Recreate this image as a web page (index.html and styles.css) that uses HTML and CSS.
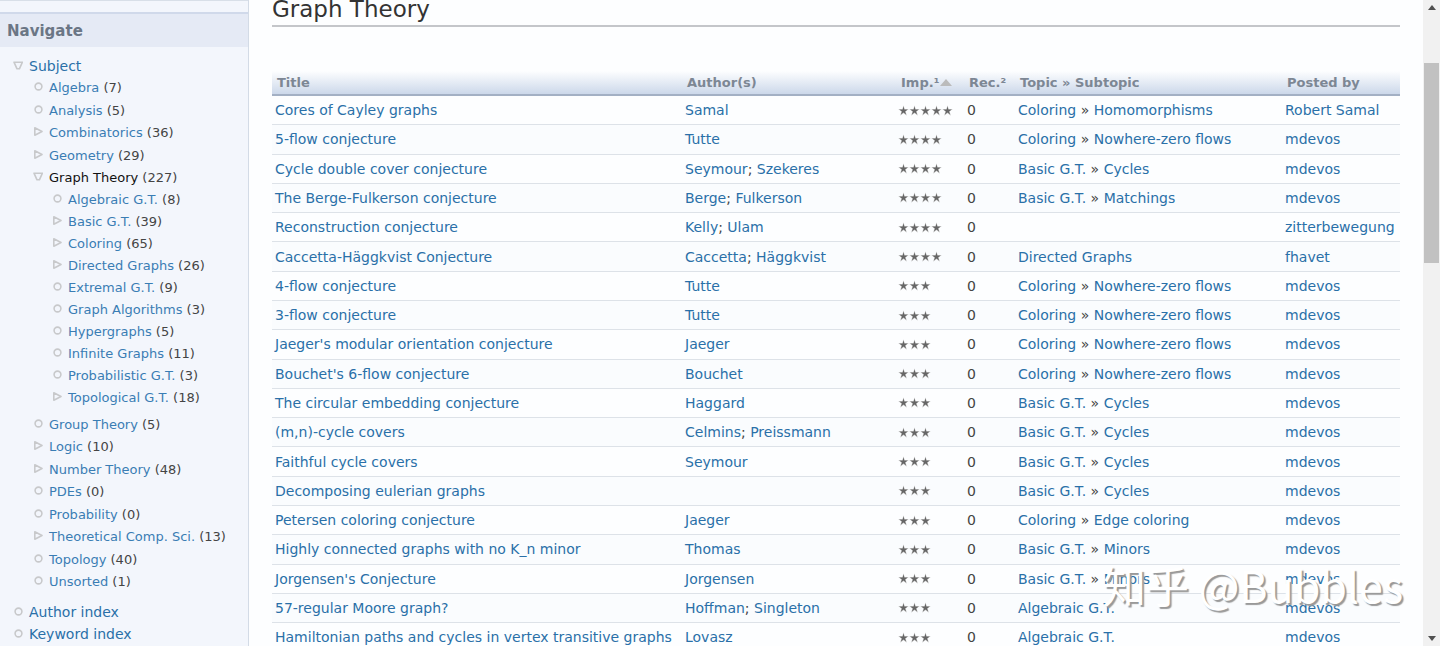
FILE: index.html
```html
<!DOCTYPE html>
<html lang="en">
<head>
    <meta charset="UTF-8">
    <title>Graph Theory | Open Problem Garden</title>
    <link rel="stylesheet" href="styles.css">
</head>
<body>
    <!-- shared icon shapes -->
    <svg class="sprite" aria-hidden="true">
        <symbol id="leaf" viewBox="0 0 10 10"><circle cx="5.5" cy="4.5" r="3.4" /></symbol>
        <symbol id="closed" viewBox="0 0 10 10"><path d="M1.8 0.8 L9 4.5 L1.8 8.2 Z" /></symbol>
        <symbol id="open" viewBox="0 0 10 10"><path d="M1 1.2 H9.4 L6.4 7.8 H4 Z" /></symbol>
        <symbol id="star" viewBox="0 0 11 11">
            <path class="glow" d="M5.5 0.2 L6.7 4 L10.9 4 L7.7 6.5 L9 10.8 L5.5 8.2 L2 10.8 L3.3 6.5 L0.1 4 L4.3 4 Z" />
            <path d="M5.5 1.2 L6.4 4.4 L9.8 4.4 L7.1 6.4 L8.2 9.7 L5.5 7.6 L2.8 9.7 L3.9 6.4 L1.2 4.4 L4.6 4.4 Z" />
        </symbol>
        <symbol id="stars3" viewBox="0 0 55 11">
            <use href="#star" width="11" height="11" />
            <use href="#star" x="11" width="11" height="11" />
            <use href="#star" x="22" width="11" height="11" />
        </symbol>
        <symbol id="stars4" viewBox="0 0 55 11">
            <use href="#stars3" width="55" height="11" />
            <use href="#star" x="33" width="11" height="11" />
        </symbol>
        <symbol id="stars5" viewBox="0 0 55 11">
            <use href="#stars4" width="55" height="11" />
            <use href="#star" x="44" width="11" height="11" />
        </symbol>
    </svg>

    <aside class="sidebar">
        <div class="block-end"></div>
        <h2>Navigate</h2>
        <ul class="menu">
            <li><svg class="mark"><use href="#open" /></svg><a href="#">Subject</a>
                <ul class="subjects">
                    <li><svg class="mark"><use href="#leaf" /></svg><a href="#">Algebra</a> (7)</li>
                    <li><svg class="mark"><use href="#leaf" /></svg><a href="#">Analysis</a> (5)</li>
                    <li><svg class="mark"><use href="#closed" /></svg><a href="#">Combinatorics</a> (36)</li>
                    <li><svg class="mark"><use href="#closed" /></svg><a href="#">Geometry</a> (29)</li>
                    <li><svg class="mark"><use href="#open" /></svg><a href="#" class="active">Graph Theory</a> (227)
                        <ul class="topics">
                            <li><svg class="mark"><use href="#leaf" /></svg><a href="#">Algebraic G.T.</a> (8)</li>
                            <li><svg class="mark"><use href="#closed" /></svg><a href="#">Basic G.T.</a> (39)</li>
                            <li><svg class="mark"><use href="#closed" /></svg><a href="#">Coloring</a> (65)</li>
                            <li><svg class="mark"><use href="#closed" /></svg><a href="#">Directed Graphs</a> (26)</li>
                            <li><svg class="mark"><use href="#leaf" /></svg><a href="#">Extremal G.T.</a> (9)</li>
                            <li><svg class="mark"><use href="#leaf" /></svg><a href="#">Graph Algorithms</a> (3)</li>
                            <li><svg class="mark"><use href="#leaf" /></svg><a href="#">Hypergraphs</a> (5)</li>
                            <li><svg class="mark"><use href="#leaf" /></svg><a href="#">Infinite Graphs</a> (11)</li>
                            <li><svg class="mark"><use href="#leaf" /></svg><a href="#">Probabilistic G.T.</a> (3)</li>
                            <li><svg class="mark"><use href="#closed" /></svg><a href="#">Topological G.T.</a> (18)</li>
                        </ul>
                    </li>
                    <li><svg class="mark"><use href="#leaf" /></svg><a href="#">Group Theory</a> (5)</li>
                    <li><svg class="mark"><use href="#closed" /></svg><a href="#">Logic</a> (10)</li>
                    <li><svg class="mark"><use href="#closed" /></svg><a href="#">Number Theory</a> (48)</li>
                    <li><svg class="mark"><use href="#leaf" /></svg><a href="#">PDEs</a> (0)</li>
                    <li><svg class="mark"><use href="#leaf" /></svg><a href="#">Probability</a> (0)</li>
                    <li><svg class="mark"><use href="#closed" /></svg><a href="#">Theoretical Comp. Sci.</a> (13)</li>
                    <li><svg class="mark"><use href="#leaf" /></svg><a href="#">Topology</a> (40)</li>
                    <li><svg class="mark"><use href="#leaf" /></svg><a href="#">Unsorted</a> (1)</li>
                </ul>
            </li>
            <li><svg class="mark"><use href="#leaf" /></svg><a href="#">Author index</a></li>
            <li><svg class="mark"><use href="#leaf" /></svg><a href="#">Keyword index</a></li>
        </ul>
    </aside>

    <main class="content">
        <h1>Graph Theory</h1>
        <table class="problems">
            <colgroup>
                <col class="col-title">
                <col class="col-author">
                <col class="col-imp">
                <col class="col-rec">
                <col class="col-topic">
                <col class="col-user">
            </colgroup>
            <thead>
                <tr>
                    <th>Title</th>
                    <th>Author(s)</th>
                    <th>Imp.¹<svg class="sort" viewBox="0 0 12 7"><path d="M6 0 L12 7 H0 Z" /></svg></th>
                    <th>Rec.²</th>
                    <th>Topic » Subtopic</th>
                    <th>Posted by</th>
                </tr>
            </thead>
            <tbody>
                <tr>
                    <td><a href="#">Cores of Cayley graphs</a></td>
                    <td><a href="#">Samal</a></td>
                    <td class="imp"><svg class="stars"><use href="#stars5" /></svg></td>
                    <td>0</td>
                    <td><a href="#">Coloring</a> » <a href="#">Homomorphisms</a></td>
                    <td><a href="#">Robert Samal</a></td>
                </tr>
                <tr>
                    <td><a href="#">5-flow conjecture</a></td>
                    <td><a href="#">Tutte</a></td>
                    <td class="imp"><svg class="stars"><use href="#stars4" /></svg></td>
                    <td>0</td>
                    <td><a href="#">Coloring</a> » <a href="#">Nowhere-zero flows</a></td>
                    <td><a href="#">mdevos</a></td>
                </tr>
                <tr>
                    <td><a href="#">Cycle double cover conjecture</a></td>
                    <td><a href="#">Seymour</a>; <a href="#">Szekeres</a></td>
                    <td class="imp"><svg class="stars"><use href="#stars4" /></svg></td>
                    <td>0</td>
                    <td><a href="#">Basic G.T.</a> » <a href="#">Cycles</a></td>
                    <td><a href="#">mdevos</a></td>
                </tr>
                <tr>
                    <td><a href="#">The Berge-Fulkerson conjecture</a></td>
                    <td><a href="#">Berge</a>; <a href="#">Fulkerson</a></td>
                    <td class="imp"><svg class="stars"><use href="#stars4" /></svg></td>
                    <td>0</td>
                    <td><a href="#">Basic G.T.</a> » <a href="#">Matchings</a></td>
                    <td><a href="#">mdevos</a></td>
                </tr>
                <tr>
                    <td><a href="#">Reconstruction conjecture</a></td>
                    <td><a href="#">Kelly</a>; <a href="#">Ulam</a></td>
                    <td class="imp"><svg class="stars"><use href="#stars4" /></svg></td>
                    <td>0</td>
                    <td></td>
                    <td><a href="#">zitterbewegung</a></td>
                </tr>
                <tr>
                    <td><a href="#">Caccetta-Häggkvist Conjecture</a></td>
                    <td><a href="#">Caccetta</a>; <a href="#">Häggkvist</a></td>
                    <td class="imp"><svg class="stars"><use href="#stars4" /></svg></td>
                    <td>0</td>
                    <td><a href="#">Directed Graphs</a></td>
                    <td><a href="#">fhavet</a></td>
                </tr>
                <tr>
                    <td><a href="#">4-flow conjecture</a></td>
                    <td><a href="#">Tutte</a></td>
                    <td class="imp"><svg class="stars"><use href="#stars3" /></svg></td>
                    <td>0</td>
                    <td><a href="#">Coloring</a> » <a href="#">Nowhere-zero flows</a></td>
                    <td><a href="#">mdevos</a></td>
                </tr>
                <tr>
                    <td><a href="#">3-flow conjecture</a></td>
                    <td><a href="#">Tutte</a></td>
                    <td class="imp"><svg class="stars"><use href="#stars3" /></svg></td>
                    <td>0</td>
                    <td><a href="#">Coloring</a> » <a href="#">Nowhere-zero flows</a></td>
                    <td><a href="#">mdevos</a></td>
                </tr>
                <tr>
                    <td><a href="#">Jaeger's modular orientation conjecture</a></td>
                    <td><a href="#">Jaeger</a></td>
                    <td class="imp"><svg class="stars"><use href="#stars3" /></svg></td>
                    <td>0</td>
                    <td><a href="#">Coloring</a> » <a href="#">Nowhere-zero flows</a></td>
                    <td><a href="#">mdevos</a></td>
                </tr>
                <tr>
                    <td><a href="#">Bouchet's 6-flow conjecture</a></td>
                    <td><a href="#">Bouchet</a></td>
                    <td class="imp"><svg class="stars"><use href="#stars3" /></svg></td>
                    <td>0</td>
                    <td><a href="#">Coloring</a> » <a href="#">Nowhere-zero flows</a></td>
                    <td><a href="#">mdevos</a></td>
                </tr>
                <tr>
                    <td><a href="#">The circular embedding conjecture</a></td>
                    <td><a href="#">Haggard</a></td>
                    <td class="imp"><svg class="stars"><use href="#stars3" /></svg></td>
                    <td>0</td>
                    <td><a href="#">Basic G.T.</a> » <a href="#">Cycles</a></td>
                    <td><a href="#">mdevos</a></td>
                </tr>
                <tr>
                    <td><a href="#">(m,n)-cycle covers</a></td>
                    <td><a href="#">Celmins</a>; <a href="#">Preissmann</a></td>
                    <td class="imp"><svg class="stars"><use href="#stars3" /></svg></td>
                    <td>0</td>
                    <td><a href="#">Basic G.T.</a> » <a href="#">Cycles</a></td>
                    <td><a href="#">mdevos</a></td>
                </tr>
                <tr>
                    <td><a href="#">Faithful cycle covers</a></td>
                    <td><a href="#">Seymour</a></td>
                    <td class="imp"><svg class="stars"><use href="#stars3" /></svg></td>
                    <td>0</td>
                    <td><a href="#">Basic G.T.</a> » <a href="#">Cycles</a></td>
                    <td><a href="#">mdevos</a></td>
                </tr>
                <tr>
                    <td><a href="#">Decomposing eulerian graphs</a></td>
                    <td></td>
                    <td class="imp"><svg class="stars"><use href="#stars3" /></svg></td>
                    <td>0</td>
                    <td><a href="#">Basic G.T.</a> » <a href="#">Cycles</a></td>
                    <td><a href="#">mdevos</a></td>
                </tr>
                <tr>
                    <td><a href="#">Petersen coloring conjecture</a></td>
                    <td><a href="#">Jaeger</a></td>
                    <td class="imp"><svg class="stars"><use href="#stars3" /></svg></td>
                    <td>0</td>
                    <td><a href="#">Coloring</a> » <a href="#">Edge coloring</a></td>
                    <td><a href="#">mdevos</a></td>
                </tr>
                <tr>
                    <td><a href="#">Highly connected graphs with no K_n minor</a></td>
                    <td><a href="#">Thomas</a></td>
                    <td class="imp"><svg class="stars"><use href="#stars3" /></svg></td>
                    <td>0</td>
                    <td><a href="#">Basic G.T.</a> » <a href="#">Minors</a></td>
                    <td><a href="#">mdevos</a></td>
                </tr>
                <tr>
                    <td><a href="#">Jorgensen's Conjecture</a></td>
                    <td><a href="#">Jorgensen</a></td>
                    <td class="imp"><svg class="stars"><use href="#stars3" /></svg></td>
                    <td>0</td>
                    <td><a href="#">Basic G.T.</a> » <a href="#">Minors</a></td>
                    <td><a href="#">mdevos</a></td>
                </tr>
                <tr>
                    <td><a href="#">57-regular Moore graph?</a></td>
                    <td><a href="#">Hoffman</a>; <a href="#">Singleton</a></td>
                    <td class="imp"><svg class="stars"><use href="#stars3" /></svg></td>
                    <td>0</td>
                    <td><a href="#">Algebraic G.T.</a></td>
                    <td><a href="#">mdevos</a></td>
                </tr>
                <tr>
                    <td><a href="#">Hamiltonian paths and cycles in vertex transitive graphs</a></td>
                    <td><a href="#">Lovasz</a></td>
                    <td class="imp"><svg class="stars"><use href="#stars3" /></svg></td>
                    <td>0</td>
                    <td><a href="#">Algebraic G.T.</a></td>
                    <td><a href="#">mdevos</a></td>
                </tr>
            </tbody>
        </table>
    </main>

    <div class="scrollbar" aria-hidden="true">
        <svg class="arrow" viewBox="0 0 8 5"><path d="M4 0 L8 5 H0 Z" /></svg>
        <div class="track"><div class="thumb"></div></div>
        <svg class="arrow" viewBox="0 0 8 5"><path d="M0 0 H8 L4 5 Z" /></svg>
    </div>

    <div class="watermark">知乎 @Bubbles</div>
</body>
</html>
```
FILE: styles.css
```css
* {
    box-sizing: border-box;
}

body {
    display: flex;
    height: 100vh;
    margin: 0;
    overflow: hidden;
    position: relative;
    font-family: "DejaVu Sans", Verdana, sans-serif;
    font-size: 14px;
    color: #444;
    background-color: #fdfeff;
}

a {
    color: #2a70a8;
    text-decoration: none;
}

a:hover {
    text-decoration: underline;
}

.sprite {
    position: absolute;
    width: 0;
    height: 0;
}

/* sidebar */
.sidebar {
    flex: none;
    width: 249px;
    border-right: 1px solid #d3dbe6;
    background-color: #f3f6fc;
}

.block-end {
    height: 12px;
    border-top: 1px solid #d8dfe8;
}

.sidebar h2 {
    margin: 0;
    padding: 1px 7px 0;
    border-top: 2px solid #d0d9ea;
    background-color: #e5eaf5;
    font-size: 15px;
    line-height: 32px;
    color: #6b7685;
}

.menu,
.menu ul {
    margin: 0;
    padding: 0;
    list-style: none;
}

.menu {
    padding: 8px 0 0 13px;
    line-height: 22px;
}

    .menu .subjects {
        padding: 0 0 7px 20px;
        font-size: 13px;
    }

    .subjects > li:nth-child(odd) {
        padding-bottom: 1px;
    }

    .menu .topics {
        padding: 0 0 4px 19px;
    }

    .subjects a {
        color: #3a7db4;
    }

    .menu .active {
        color: #111;
    }

.mark {
    width: 10px;
    height: 10px;
    margin-right: 6px;
    fill: none;
    stroke: #c8c9cb;
    stroke-width: 1.6;
    stroke-linejoin: round;
}

/* problem list */
.content {
    flex: 1;
    min-width: 0;
    padding: 0 23px;
}

h1 {
    margin: -5px 0 44px;
    padding-bottom: 2px;
    border-bottom: 2px solid #c4c6ca;
    font-size: 23px;
    font-weight: normal;
    line-height: 28px;
    color: #333;
}

.problems {
    width: 100%;
    height: 90vh;
    table-layout: fixed;
    border-collapse: collapse;
}

.col-title { width: 410px; }
.col-author { width: 214px; }
.col-imp { width: 68px; }
.col-rec { width: 51px; }
.col-topic { width: 267px; }

th {
    height: 24px;
    padding: 0 5px;
    border-bottom: 2px solid #a3b0c4;
    background: linear-gradient(#fdfeff, #ccd8ea);
    font-size: 13px;
    text-align: left;
    white-space: nowrap;
    color: #7d8794;
}

td {
    padding: 0 3px;
    border-bottom: 1px solid #dde2e8;
    line-height: 28px;
    white-space: nowrap;
}

    td.imp {
        padding: 0 2px;
    }

tbody tr:nth-child(even) {
    background-color: #fafcfe;
}

.sort {
    width: 12px;
    height: 7px;
    margin-left: 1px;
    vertical-align: 1px;
    fill: #bbb;
}

.stars {
    display: block;
    width: 55px;
    height: 11px;
    fill: #666;
}

    .glow {
        fill: #d4d4d4;
    }

/* window scrollbar */
.scrollbar {
    flex: none;
    display: flex;
    flex-direction: column;
    align-items: center;
    width: 17px;
    padding: 5px 0;
    background-color: #f1f1f1;
}

.arrow {
    width: 8px;
    height: 5px;
    fill: #505050;
}

.track {
    flex: 1;
    width: 15px;
    padding-top: 53px;
}

.thumb {
    height: 200px;
    background-color: #c1c1c1;
}

.watermark {
    position: absolute;
    right: 37px;
    bottom: 32px;
    font-family: "Noto Sans CJK SC", sans-serif;
    font-size: 43px;
    line-height: 60px;
    color: #fff;
    text-shadow: 2px 2px 1px #999;
    pointer-events: none;
}
```
